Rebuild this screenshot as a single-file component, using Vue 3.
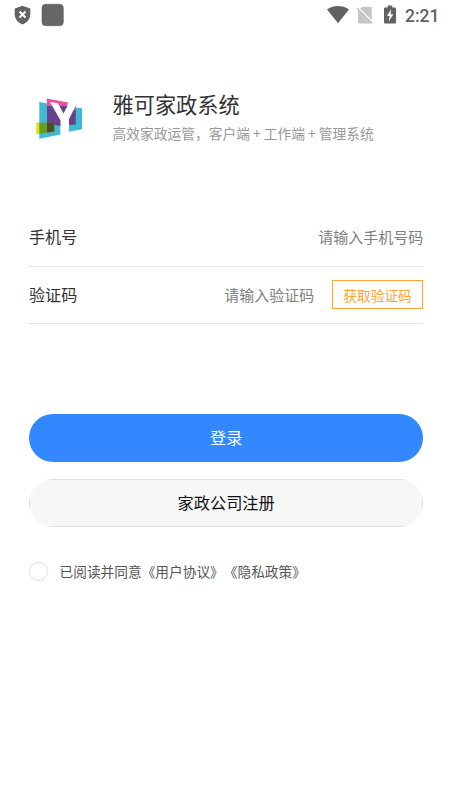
<script setup>
import { ref } from 'vue'

const phone = ref('')
const code = ref('')
const agreed = ref(false)
</script>

<template>
  <div class="page">
    <header class="status">
      <svg viewBox="0 0 70 30" width="70" height="30">
        <path d="M22.500 5.700 30.300 8.600V14c0 5-3.200 8.700-7.800 10.400C17.900 22.700 14.700 19 14.700 14V8.600Z" fill="#626262" />
        <path d="m19.500 11.500 6 6m0-6-6 6" stroke="#fff" stroke-width="2" />
        <rect x="42" y="4.300" width="21.300" height="21.400" rx="3.600" fill="#666" stroke="#5a5a5a" stroke-width=".6" />
      </svg>
      <div class="status-right">
        <svg viewBox="325 0 75 30" width="75" height="30">
          <path d="M327 9.500C333.200 4.900 342.800 4.900 349 9.500L338 23.300Z" fill="#626262" />
          <path d="M362.500 6.800h8.300q1 0 1 1v12.500L360 8.500ZM358 9 372 23 371 23.500H359q-1 0-1-1Z" fill="#c6c6c6" />
          <path d="m356.700 7.700 15.800 15.800" stroke="#c6c6c6" stroke-width="1.300" />
          <path d="M387.700 5.500h4.600v2h2.700q1 0 1 1v14q0 1-1 1h-10q-1 0-1-1v-14q0-1 1-1h2.700Z" fill="#626262" />
          <path d="M391.200 9.300 386.900 16h2.700l-.8 5.500 4.500-7.300h-2.800Z" fill="#fff" />
        </svg>
        <span class="time">2:21</span>
      </div>
    </header>

    <section class="brand">
      <svg class="logo" viewBox="36 97 48 44" width="48" height="44">
        <path d="M39.300 102 50 104V123H60.500V134.500L39.300 138.700Z" fill="#40b9d3" />
        <path d="M69 107 82 108.300V129.300L69 131.700Z" fill="#40b9d3" />
        <path d="M47 102.500 75.800 107V124.500L60 126 47 123.500Z" fill="#69408e" />
        <path d="M46.800 98.600 68.300 102.500 67 106H47Z" fill="#ed4f9b" />
        <path d="M76.500 104 73 110.500 75.800 109.500Z" fill="#ed4f9b" />
        <path d="M36.700 122.800H54.300V131.500L36.700 134.300Z" fill="#679b24" />
        <path d="M36.700 122.800H39.300V133.900L36.700 134.300Z" fill="#dce900" />
        <path d="M47 122.800H54.300V131.500L47 132.500Z" fill="#4b4e25" />
        <path d="M50 102 58 103.200 63.500 113.500 68.300 104.600 76 105.200 69 119V133H60.500V120.500Z" fill="#fff" />
      </svg>
      <div class="brand-text">
        <h1>雅可家政系统</h1>
        <p>高效家政运管，客户端 + 工作端 + 管理系统</p>
      </div>
    </section>

    <form class="form" @submit.prevent>
      <label class="row phone-row">
        <span class="label">手机号</span>
        <input v-model="phone" type="tel" placeholder="请输入手机号码" />
      </label>
      <div class="row">
        <label class="label" for="code">验证码</label>
        <input id="code" v-model="code" placeholder="请输入验证码" />
        <button class="send" type="button">获取验证码</button>
      </div>
      <button class="action login" type="submit">登录</button>
      <button class="action register" type="button">家政公司注册</button>
      <label class="agreement">
        <input v-model="agreed" type="checkbox" />
        <span>已阅读并同意《用户协议》《隐私政策》</span>
      </label>
    </form>
  </div>
</template>

<style>
body {
  background: #fff;
}
</style>

<style scoped>
.page {
  box-sizing: border-box;
  width: 450px;
  height: 800px;
  overflow: hidden;
  background: #fff;
  font-family: "Noto Sans CJK SC", sans-serif;
  color: #333;
}
.status,
.status-right {
  display: flex;
  height: 30px;
}
.status {
  justify-content: space-between;
}
.status-right {
  width: 125px;
}
.time {
  margin-left: 5px;
  font: 500 17.5px/32px Roboto, sans-serif;
  color: #626262;
}
svg {
  display: block;
  flex: none;
}
.brand {
  display: flex;
  gap: 28.5px;
  padding: 59px 0 0 36px;
  height: 90px;
}
.logo {
  margin-top: 8px;
}
h1 {
  margin: 0;
  font-size: 21.2px;
  line-height: 30px;
  font-weight: 400;
}
p {
  margin: 4px 0 0;
  font-size: 13.75px;
  line-height: 20px;
  color: #999;
  white-space: nowrap;
}
.form {
  display: flex;
  flex-direction: column;
  padding: 30px 26.7px 0 29px;
}
.row {
  display: flex;
  align-items: center;
  box-sizing: border-box;
  height: 57px;
  padding-bottom: 2px;
  border-bottom: 1px solid #e6e6e6;
}
.phone-row {
  height: 58px;
}
.label {
  flex: none;
  width: 80px;
  padding-bottom: 1px;
  font-size: 16.1px;
  line-height: 24px;
}
input,
button {
  font-family: inherit;
  box-sizing: border-box;
}
.row input {
  flex: 1;
  min-width: 0;
  height: 28px;
  padding: 0;
  border: 0;
  outline: 0;
  background: none;
  font-size: 15px;
  text-align: right;
  color: #333;
}
.row input::placeholder {
  color: #808080;
}
.send {
  flex: none;
  width: 91.5px;
  height: 29px;
  margin-left: 17.5px;
  padding: 1px 0 0;
  border: 1px solid #ffa52f;
  background: #fff;
  font-size: 13.7px;
  line-height: 20px;
  color: #ffa52f;
}
.action {
  height: 47.5px;
  padding: 0 0 1px;
  border: 0;
  border-radius: 24px;
  font-size: 16.2px;
}
.login {
  margin-top: 90px;
  background: #3388ff;
  color: #fff;
}
.register {
  position: relative;
  overflow: hidden;
  margin-top: 17.5px;
  background: #f7f7f7;
  color: #111;
}
.register::after {
  content: "";
  position: absolute;
  inset: 0;
  border: 1px solid #dedede;
}
.agreement {
  display: flex;
  align-items: center;
  gap: 12px;
  margin-top: 34.5px;
  font-size: 13.7px;
  line-height: 20px;
  color: #555;
  white-space: nowrap;
}
.agreement span {
  padding-bottom: 1px;
  text-spacing-trim: space-all;
}
.agreement input {
  appearance: none;
  width: 18.5px;
  height: 18.5px;
  margin: 0;
  border: 1.5px solid #e0e0e0;
  border-radius: 50%;
}
.agreement input:checked {
  background: #3388ff;
}
</style>
